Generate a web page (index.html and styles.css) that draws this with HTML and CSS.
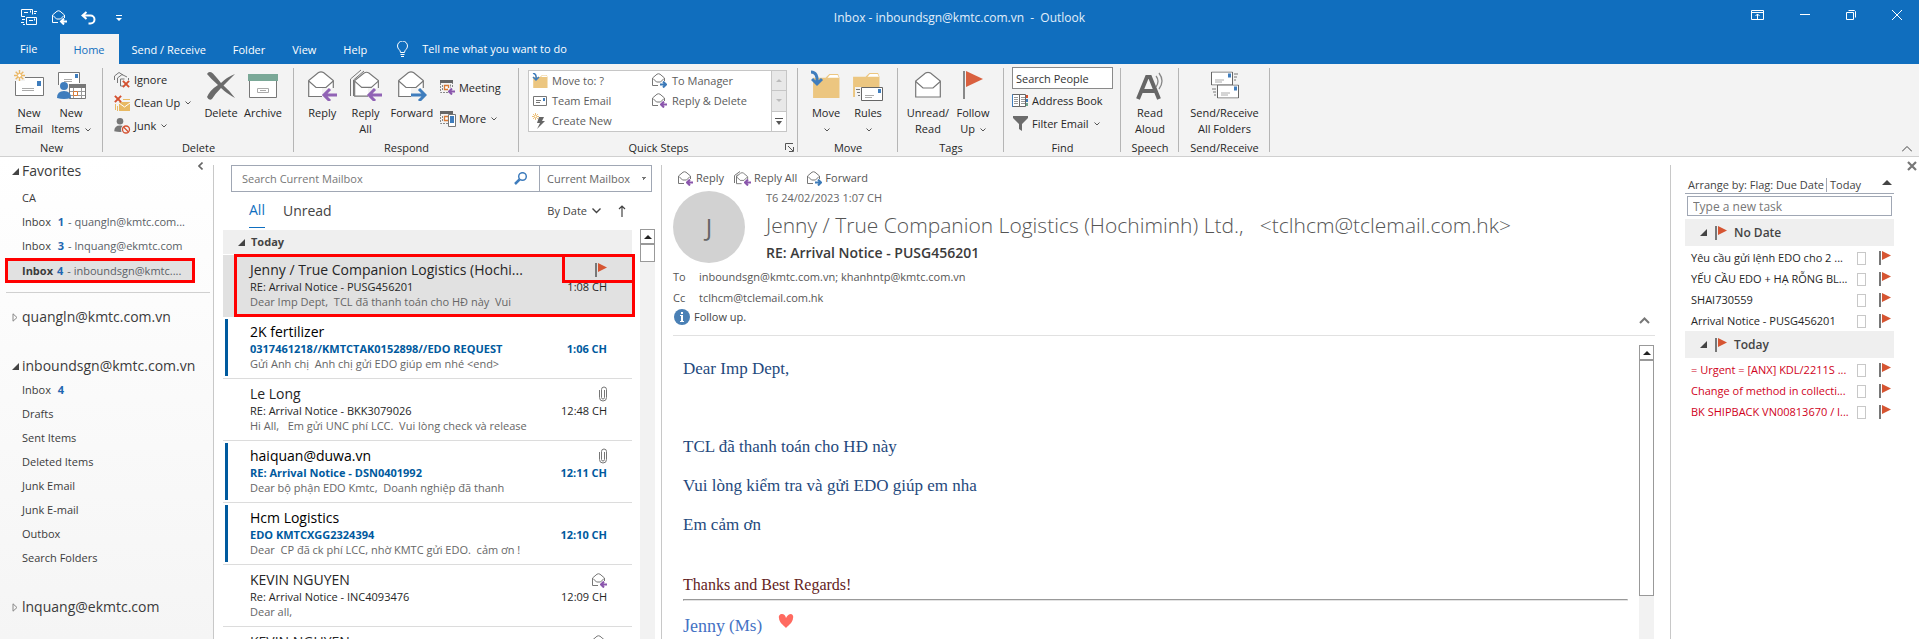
FILE: index.html
```
<!DOCTYPE html>
<html lang="en">
<head>
<meta charset="utf-8">
<title>Inbox - Outlook</title>
<link rel="stylesheet" href="styles.css">
</head>
<body>
<svg class="defs" aria-hidden="true">
  <symbol id="flag" viewBox="0 0 12 14"><path d="M0 0h2v14H0z" fill="#777"/><path d="M3 0l9 4.500L3 9z" fill="#d65532"/></symbol>
  <symbol id="tri-open" viewBox="0 0 7 7"><path d="M7 0v7H0z" fill="#444"/></symbol>
  <symbol id="tri-shut" viewBox="0 0 6 9"><path d="M.5.8v7.400L4.500 4.500z" fill="none" stroke="#888"/></symbol>
  <symbol id="chev" viewBox="0 0 6 4"><path d="M.5.5L3 3 5.500.5" fill="none" stroke="#555"/></symbol>
  <symbol id="tri-up" viewBox="0 0 8 4"><path d="M0 4l4-4 4 4z" fill="currentColor"/></symbol>
  <symbol id="clip" viewBox="0 0 8 16"><path d="M5.500 4v7.500a1.500 1.500 0 0 1-3 0V3.500a2.500 2.500 0 0 1 5 0v8a3.500 3.500 0 0 1-7 0V4" fill="none" stroke="#777"/></symbol>
  <symbol id="env-s" viewBox="0 0 15 15"><path d="M6 12.500H.5V5L5 1.200Q6.500.3 8 1.200L12.500 5v3M1 5.500L4.500 9h4L12 5.500" fill="none" stroke="#777"/></symbol>
  <symbol id="arr-l" viewBox="0 0 7 7"><path d="M7 3.500H1.500M4 .5L1 3.500l3 3" fill="none" stroke="#8a56ac" stroke-width="2"/></symbol>
  <symbol id="arr-r" viewBox="0 0 7 7"><path d="M0 3.500h5.500M3 .5l3 3-3 3" fill="none" stroke="#3c7ab8" stroke-width="2"/></symbol>
  <symbol id="reply-s" viewBox="0 0 15 15"><use href="#env-s" width="15" height="15"/><use href="#arr-l" x="8" y="8" width="7" height="7"/></symbol>
  <symbol id="fwd-s" viewBox="0 0 15 15"><use href="#env-s" width="15" height="15"/><use href="#arr-r" x="8" y="8" width="7" height="7"/></symbol>
  <symbol id="replyall-s" viewBox="0 0 17 15"><path d="M.5 12V4.500L6 .5M2.500 12V5L4 3.500" fill="none" stroke="#777"/><use href="#env-s" x="2" y="1" width="14" height="14"/><use href="#arr-l" x="10" y="8" width="7" height="7"/></symbol>
  <symbol id="env-l" viewBox="0 0 27 27"><path d="M.7 25.500V9.500L10.500 1.500q2.500-1.400 5 0l9.800 8v16z" fill="#fff" stroke="#777" stroke-width="1.200"/><path d="M.7 10L8 16.500h10L25.300 10" fill="none" stroke="#777" stroke-width="1.200"/></symbol>
  <symbol id="minimail" viewBox="0 0 22 14"><path d="M.5.5h21v13H.5z" fill="#fff" stroke="#666"/><path d="M17 2h3v4h-3z" fill="#3f7dbd"/><path d="M4 8.500h9M4 10.500h7" stroke="#aaa"/></symbol>
  <symbol id="folder" viewBox="0 0 28 25"><path d="M0 25V4h13l4-4h9l1.500 4V25z" fill="#ecc680"/><path d="M15 4l2.500-3h8L27 4z" fill="#fff"/></symbol>
  <symbol id="cal" viewBox="0 0 13 13"><path d="M0 0h13v3H0z" fill="#666"/><path d="M.5 3v9.500h12V3M2.500 5v6M10.500 4.500v6" fill="none" stroke="#888" stroke-dasharray="2 1"/><path d="M4.500 5.500h4v4h-4z" fill="#fff" stroke="#d87a35" stroke-width="1.300"/></symbol>
  <symbol id="spark" viewBox="0 0 12 12"><path d="M6 0v12M0 6h12M1.800 1.800l8.400 8.400M10.200 1.800l-8.400 8.400" stroke="#eab765" stroke-width="1.500"/><circle cx="6" cy="6" r="2.200" fill="#fff" stroke="#eab765"/></symbol>
  <symbol id="person" viewBox="0 0 14 17"><circle cx="7" cy="4" r="4" fill="currentColor"/><path d="M0 16q0-7 7-7t7 7q-7 2-14 0z" fill="currentColor"/></symbol>
  <symbol id="redx" viewBox="0 0 9 9"><path d="M1 1l7 7M8 1L1 8" stroke="#d4502f" stroke-width="2.200"/></symbol>
</svg>

<header class="titlebar">
  <div class="titlerow">
    <div class="quick">
      <button class="bare" aria-label="Send and receive all"><svg width="17" height="17" viewBox="0 0 17 17" fill="none" stroke="#fff"><path d="M4 7.500H.5v-7h11v5M5.500 8.500h10v7h-10zM3 3.500h4M8 11.500h4M13 2.500h3M13 4.500h2M1 10.500h3M0 13.500h3M2 15.500h2"/><path d="M9 2.500h1M13 10.500h1" stroke-width="2"/></svg></button>
      <button class="bare" aria-label="Reply"><svg width="15" height="15" viewBox="0 0 15 15" fill="none" stroke="#fff"><path d="M6 12.500H.5V5L5 1.200Q6.500.3 8 1.200L12.500 5v3M1 5.500L4.500 9h4L12 5.500"/><path d="M15 11.500H9.500M12 8.500l-3 3 3 3" stroke-width="2"/></svg></button>
      <button class="bare" aria-label="Undo"><svg width="15" height="14" viewBox="0 0 15 14" fill="none" stroke="#fff" stroke-width="2"><path d="M5.500 1L1.500 4.500l4 3.500M2 4.500h7.500a4 4 0 0 1 0 8H7.500"/></svg></button>
      <button class="bare" aria-label="Customize"><svg width="6" height="6" viewBox="0 0 6 6"><path d="M0 0h6v1H0zM0 3h6L3 6z" fill="#fff"/></svg></button>
    </div>
    <div class="wintitle">Inbox - inboundsgn@kmtc.com.vn&nbsp; -&nbsp; Outlook</div>
    <div class="winbtns">
      <button class="bare" aria-label="Ribbon display"><svg width="13" height="10" viewBox="0 0 13 10" fill="none" stroke="#fff"><path d="M.5.5h12v9H.5zM0 2.500h13M6.500 9V4M4.500 6l2-2 2 2"/></svg></button>
      <button class="bare" aria-label="Minimize"><svg width="10" height="10" viewBox="0 0 10 10"><path d="M0 4.500h10" stroke="#fff"/></svg></button>
      <button class="bare" aria-label="Restore"><svg width="10" height="10" viewBox="0 0 10 10" fill="none" stroke="#fff"><path d="M.5 2.500h7v7h-7zM2.500.5h6l1 1V7.500"/></svg></button>
      <button class="bare" aria-label="Close"><svg width="10" height="10" viewBox="0 0 10 10"><path d="M0 0l10 10M10 0L0 10" stroke="#fff"/></svg></button>
    </div>
  </div>
  <nav class="tabs">
    <a href="#" class="tab tab--file">File</a>
    <a href="#" class="tab tab--on">Home</a>
    <a href="#" class="tab">Send / Receive</a>
    <a href="#" class="tab">Folder</a>
    <a href="#" class="tab">View</a>
    <a href="#" class="tab">Help</a>
    <a href="#" class="tab tell"><svg width="11" height="16" viewBox="0 0 11 16" fill="none" stroke="#fff"><path d="M3.500 11.500C3.500 8.500.5 8.500.5 5a5 5 0 0 1 10 0c0 3.500-3 3.500-3 6.500zM3.500 13.500h4M4 15.500h3"/></svg>Tell me what you want to do</a>
  </nav>
</header>

<section class="ribbon" aria-label="Ribbon">
  <div class="group g-new">
    <div class="gbody">
      <button class="big"><svg width="31" height="30" viewBox="0 0 31 30"><path d="M1.500 7.500h28v18h-28z" fill="#fff" stroke="#777"/><path d="M23 11h4v5h-4z" fill="#3f7dbd"/><path d="M8 18.500h12M8 20.500h12" stroke="#aaa"/><path d="M0 0h11v11H0z" fill="#f3f3f3"/><use href="#spark" width="11" height="11"/></svg><span>New<br>Email</span></button>
      <button class="big"><svg width="30" height="30" viewBox="0 0 30 30"><path d="M2.500 15V2.500h21V13" fill="#fff" stroke="#777"/><path d="M19 4h3v4h-3z" fill="#3f7dbd"/><path d="M8 9.500h8M8 11.500h8" stroke="#aaa"/><path d="M13 14h17v15H13z" fill="#f3f3f3"/><path d="M13.500 14.500h16v14h-16z" fill="#fff" stroke="#777"/><path d="M13 14h17v4H13z" fill="#777"/><path d="M17.500 18v10M25.500 18v10M14 21.500h15M14 25.500h15" stroke="#999"/><path d="M17.500 21.500h4v4h-4z" fill="#fff" stroke="#d87a35"/><svg x="1" y="12" width="14" height="17" color="#3f7dbd"><use href="#person"/></svg></svg><span>New<br>Items <svg class="chev" width="6" height="4"><use href="#chev"/></svg></span></button>
    </div>
    <div class="glabel">New</div>
  </div>
  <div class="group g-delete">
    <div class="gbody">
      <div class="smalls">
        <button class="small"><svg width="17" height="16" viewBox="0 0 17 16"><path d="M.5 8V4L5 .5 9 3M3.500 11V6L8 2.500l5 2.500M6.500 14V7h4M6.500 14h3M14.500 6v2" fill="none" stroke="#777"/><use href="#redx" x="8" y="8" width="8" height="8"/></svg>Ignore</button>
        <button class="small"><svg width="17" height="16" viewBox="0 0 17 16"><path d="M5 7h11v9H5z" fill="#e8b963"/><path d="M5 8l5.500 4L16 8" stroke="#fff" fill="none"/><path d="M9 4.500h7M1.500 9v6M3.500 11v5" stroke="#e8b963"/><use href="#redx" x="0" y="0" width="8" height="8"/></svg>Clean Up <svg class="chev" width="6" height="4"><use href="#chev"/></svg></button>
        <button class="small"><svg width="17" height="16" viewBox="0 0 17 16"><svg width="12" height="14" color="#777"><use href="#person"/></svg><circle cx="12" cy="11.500" r="5" fill="#f3f3f3"/><circle cx="12" cy="11.500" r="3.500" fill="none" stroke="#d4502f" stroke-width="1.300"/><path d="M9.500 9l5 5" stroke="#d4502f" stroke-width="1.300"/></svg>Junk <svg class="chev" width="6" height="4"><use href="#chev"/></svg></button>
      </div>
      <button class="big"><svg width="30" height="30" viewBox="0 0 30 30"><path d="M1 4Q3 .5 7 3.500Q12 9 15 13Q21 7 29 4Q23 10 17.500 15.500Q24 21 29 28Q20 23 15 18Q9 24 6 29Q3 31 1 27Q4 20 12 15Q5 9 1 4z" fill="#6b6b6b"/></svg><span>Delete</span></button>
      <button class="big"><svg width="30" height="30" viewBox="0 0 30 30"><path d="M1.500 8h27v19.500h-27z" fill="#fff" stroke="#777"/><path d="M0 4h30v7H0z" fill="#7aa897"/><path d="M9.500 18.500h11v4h-11zM12 20.500h6" fill="none" stroke="#aaa"/></svg><span>Archive</span></button>
    </div>
    <div class="glabel">Delete</div>
  </div>
  <div class="group g-respond">
    <div class="gbody">
      <button class="big"><svg width="30" height="30" viewBox="0 0 30 30"><use href="#env-l" x="1" y="1" width="27" height="27"/><path d="M15 18h15v12H15z" fill="#f3f3f3"/><path d="M30 25H17M23 19l-6 6 6 6" fill="none" stroke="#9163b5" stroke-width="3"/></svg><span>Reply</span></button>
      <button class="big big--wide"><svg width="34" height="30" viewBox="0 0 34 30"><path d="M1.500 26V9L12 0M4.500 26V10L15 1" fill="none" stroke="#777"/><use href="#env-l" x="5" y="1" width="26" height="27"/><path d="M19 18h15v12H19z" fill="#f3f3f3"/><path d="M33 25H20M26 19l-6 6 6 6" fill="none" stroke="#9163b5" stroke-width="3"/></svg><span>Reply<br>All</span></button>
      <button class="big big--wide"><svg width="30" height="30" viewBox="0 0 30 30"><use href="#env-l" x="1" y="1" width="27" height="27"/><path d="M14 18h16v12H14z" fill="#f3f3f3"/><path d="M14 25h14M22 19l6 6-6 6" fill="none" stroke="#3f7dbd" stroke-width="3"/></svg><span>Forward</span></button>
      <div class="smalls smalls--two">
        <button class="small"><svg width="16" height="15" viewBox="0 0 16 15"><use href="#cal" width="13" height="13"/><path d="M8 8h7v7H8z" fill="#f3f3f3"/><use href="#arr-l" x="8" y="8" width="7" height="7"/></svg>Meeting</button>
        <button class="small"><svg width="16" height="16" viewBox="0 0 16 16"><use href="#cal" width="13" height="13"/><path d="M8.500 3.500h7v12h-7z" fill="#fff" stroke="#777"/><path d="M10 5h4v7h-4z" fill="#3f7dbd"/></svg>More <svg class="chev" width="6" height="4"><use href="#chev"/></svg></button>
      </div>
    </div>
    <div class="glabel">Respond</div>
  </div>
  <div class="group g-quick">
    <div class="gbody">
      <div class="gallery">
        <div class="steps">
          <button class="step"><svg width="16" height="16" viewBox="0 0 16 16"><use href="#folder" x="1" y="2" width="15" height="13"/><path d="M1 0q4 1 3 6M1 4l3 3 3-3" fill="none" stroke="#3f7dbd" stroke-width="1.500"/></svg>Move to: ?</button>
          <button class="step"><svg width="16" height="16" viewBox="0 0 16 16"><use href="#fwd-s" width="15" height="15"/></svg>To Manager</button>
          <button class="step"><svg width="16" height="16" viewBox="0 0 16 16"><path d="M1.500 3.500h13v9h-13zM4 7.500h5M4 9.500h4" fill="none" stroke="#777"/><path d="M11 5h2v3h-2z" fill="#3f7dbd"/></svg>Team Email</button>
          <button class="step"><svg width="16" height="16" viewBox="0 0 16 16"><use href="#reply-s" width="15" height="15"/></svg>Reply &amp; Delete</button>
          <button class="step"><svg width="16" height="16" viewBox="0 0 16 16"><use href="#spark" width="7" height="7"/><path d="M7 4h5l-2 4h3l-8 8 3-6H5z" fill="#666"/></svg>Create New</button>
        </div>
        <div class="gscroll">
          <button aria-label="Previous row"><svg width="6" height="3"><use href="#tri-up"/></svg></button>
          <button aria-label="Next row"><svg width="6" height="3" viewBox="0 0 6 3"><path d="M0 0h6L3 3z" fill="#bbb"/></svg></button>
          <button class="more" aria-label="More steps"><svg width="8" height="7" viewBox="0 0 8 7"><path d="M0 0h8v1H0zM1 3h6L4 7z" fill="#555"/></svg></button>
        </div>
      </div>
    </div>
    <div class="glabel">Quick Steps<svg class="launch" width="9" height="9" viewBox="0 0 9 9" fill="none" stroke="#555"><path d="M.5 7V.5H8M3 3l5 5M8.500 4v4.500H4"/></svg></div>
  </div>
  <div class="group g-move">
    <div class="gbody">
      <button class="big"><svg width="30" height="30" viewBox="0 0 30 30"><use href="#folder" x="2" y="4" width="27" height="24"/><path d="M0 2q7 0 6 11M1 9l5 5 5-5" fill="none" stroke="#3f7dbd" stroke-width="3"/></svg><span>Move<br><svg class="chev" width="6" height="4"><use href="#chev"/></svg></span></button>
      <button class="big"><svg width="32" height="32" viewBox="0 0 32 32"><use href="#folder" x="1" y="4" width="27" height="24"/><path d="M3 18h28v14H3z" fill="#f3f3f3"/><use href="#minimail" x="9" y="18" width="22" height="14"/><path d="M4 20.500h4M5 23.500h3M6 26.500h2" stroke="#777"/></svg><span>Rules<br><svg class="chev" width="6" height="4"><use href="#chev"/></svg></span></button>
    </div>
    <div class="glabel">Move</div>
  </div>
  <div class="group g-tags">
    <div class="gbody">
      <button class="big big--wide"><svg width="27" height="28" viewBox="0 0 27 27"><use href="#env-l" width="27" height="27"/></svg><span>Unread/<br>Read</span></button>
      <button class="big"><svg width="20" height="28" viewBox="0 0 20 28"><path d="M0 0h2v28H0z" fill="#888"/><path d="M3 0l17 8-17 8z" fill="#d9603f"/></svg><span>Follow<br>Up <svg class="chev" width="6" height="4"><use href="#chev"/></svg></span></button>
    </div>
    <div class="glabel">Tags</div>
  </div>
  <div class="group g-find">
    <div class="gbody findcol">
      <input class="people" type="text" placeholder="Search People" aria-label="Search People">
      <button class="small"><svg width="17" height="14" viewBox="0 0 17 14"><path d="M.5.5h7v12h-7zM7.500.5h6v12h-6z" fill="#fff" stroke="#666"/><path d="M.5 13V.5" stroke="#3f7dbd"/><path d="M2 3.500h4M2 5.500h4M2 7.500h4M2 9.500h4M9 3.500h4M9 5.500h4M9 7.500h4M9 9.500h4" stroke="#999"/><path d="M14 1h2v3h-2z" fill="#d4502f"/><path d="M14 5h2v3h-2z" fill="#3f7dbd"/><path d="M14 9h2v3h-2z" fill="#6aa58e"/></svg>Address Book</button>
      <button class="small"><svg width="17" height="15" viewBox="0 0 17 15"><path d="M1 0h15v2l-6 6v7l-3-2V8L1 2z" fill="#6b6b6b"/></svg>Filter Email <svg class="chev" width="6" height="4"><use href="#chev"/></svg></button>
    </div>
    <div class="glabel">Find</div>
  </div>
  <div class="group g-speech">
    <div class="gbody">
      <button class="big big--fill"><svg width="30" height="30" viewBox="0 0 30 30"><path d="M3 29L12 7h3l9 22M7 21h13" fill="none" stroke="#666" stroke-width="4"/><path d="M21 6q4 5 0 11M24 3q6 8 0 16" fill="none" stroke="#888" stroke-width="1.300"/></svg><span>Read<br>Aloud</span></button>
    </div>
    <div class="glabel">Speech</div>
  </div>
  <div class="group g-sr">
    <div class="gbody">
      <button class="big big--fill"><svg width="30" height="29" viewBox="0 0 30 29"><use href="#minimail" x="1" y="1" width="22" height="14"/><path d="M24 3.500h4M24 6.500h3M24 9.500h2M2 18.500h4M3 21.500h3M4 24.500h2" stroke="#777"/><use href="#minimail" x="7" y="14" width="22" height="14"/></svg><span>Send/Receive<br>All Folders</span></button>
    </div>
    <div class="glabel">Send/Receive</div>
  </div>
  <button class="bare collapse" aria-label="Collapse ribbon"><svg width="10" height="6" viewBox="0 0 10 6"><path d="M0 5.500l5-5 5 5" fill="none" stroke="#444"/></svg></button>
</section>

<main class="main">
  <nav class="folders" aria-label="Folders">
    <button class="bare foldpane" aria-label="Collapse folder pane"><svg width="5" height="8" viewBox="0 0 5 8"><path d="M4.500.5L1 4l3.500 3.500" fill="none" stroke="#666" stroke-width="1.600"/></svg></button>
    <a href="#" class="acct"><svg width="7" height="7"><use href="#tri-open"/></svg>Favorites</a>
    <a href="#" class="fold">CA</a>
    <a href="#" class="fold">Inbox <b>1</b><small>- quangln@kmtc.com...</small></a>
    <a href="#" class="fold">Inbox <b>3</b><small>- lnquang@ekmtc.com</small></a>
    <a href="#" class="fold fold--on"><strong>Inbox</strong> <b>4</b><small>- inboundsgn@kmtc....</small></a>
    <hr class="foldrule">
    <a href="#" class="acct"><svg width="6" height="9"><use href="#tri-shut"/></svg>quangln@kmtc.com.vn</a>
    <a href="#" class="acct acct--gap"><svg width="7" height="7"><use href="#tri-open"/></svg>inboundsgn@kmtc.com.vn</a>
    <a href="#" class="fold">Inbox <b>4</b></a>
    <a href="#" class="fold">Drafts</a>
    <a href="#" class="fold">Sent Items</a>
    <a href="#" class="fold">Deleted Items</a>
    <a href="#" class="fold">Junk Email</a>
    <a href="#" class="fold">Junk E-mail</a>
    <a href="#" class="fold">Outbox</a>
    <a href="#" class="fold">Search Folders</a>
    <a href="#" class="acct acct--gap"><svg width="6" height="9"><use href="#tri-shut"/></svg>lnquang@ekmtc.com</a>
  </nav>

  <section class="list" aria-label="Messages">
    <div class="search">
      <input type="text" placeholder="Search Current Mailbox" aria-label="Search Current Mailbox">
      <button class="bare" aria-label="Search"><svg width="14" height="13" viewBox="0 0 14 13"><circle cx="8.500" cy="4.500" r="3.800" fill="none" stroke="#3f7dbd" stroke-width="1.500"/><path d="M5.500 7.500L1 12" stroke="#3f7dbd" stroke-width="2.500"/></svg></button>
      <select aria-label="Search scope"><option>Current Mailbox</option></select>
    </div>
    <div class="filters">
      <a href="#" class="filter filter--on">All</a>
      <a href="#" class="filter">Unread</a>
      <button class="bare sort">By Date <svg width="9" height="6" viewBox="0 0 9 6"><path d="M.5.5l4 4 4-4" fill="none" stroke="#444" stroke-width="1.400"/></svg></button>
      <button class="bare" aria-label="Reverse sort"><svg width="8" height="12" viewBox="0 0 8 12"><path d="M4 12V1M1 4l3-3 3 3" fill="none" stroke="#444" stroke-width="1.200"/></svg></button>
    </div>
    <div class="scroller">
      <div class="mails">
        <div class="dayhead"><svg width="7" height="7"><use href="#tri-open"/></svg>Today</div>
        <a href="#" class="mail mail--on">
          <span class="from">Jenny / True Companion Logistics (Hochi...</span><span class="mark markflag"><svg width="12" height="14"><use href="#flag"/></svg></span>
          <span class="subj">RE: Arrival Notice - PUSG456201</span><time>1:08 CH</time>
          <span class="prev">Dear Imp Dept,&nbsp; TCL đã thanh toán cho HĐ này&nbsp; Vui</span>
        </a>
        <a href="#" class="mail mail--new">
          <span class="from">2K fertilizer</span><span class="mark"></span>
          <span class="subj">0317461218//KMTCTAK0152898//EDO REQUEST</span><time>1:06 CH</time>
          <span class="prev">Gửi Anh chị&nbsp; Anh chị gửi EDO giúp em nhé &lt;end&gt;</span>
        </a>
        <a href="#" class="mail">
          <span class="from">Le Long</span><span class="mark"><svg width="8" height="16"><use href="#clip"/></svg></span>
          <span class="subj">RE: Arrival Notice - BKK3079026</span><time>12:48 CH</time>
          <span class="prev">Hi All,&nbsp;&nbsp; Em gửi UNC phí LCC.&nbsp; Vui lòng check và release</span>
        </a>
        <a href="#" class="mail mail--new">
          <span class="from">haiquan@duwa.vn</span><span class="mark"><svg width="8" height="16"><use href="#clip"/></svg></span>
          <span class="subj">RE: Arrival Notice - DSN0401992</span><time>12:11 CH</time>
          <span class="prev">Dear bộ phận EDO Kmtc,&nbsp; Doanh nghiệp đã thanh</span>
        </a>
        <a href="#" class="mail mail--new">
          <span class="from">Hcm Logistics</span><span class="mark"></span>
          <span class="subj">EDO KMTCXGG2324394</span><time>12:10 CH</time>
          <span class="prev">Dear&nbsp; CP đã ck phí LCC, nhờ KMTC gửi EDO.&nbsp; cảm ơn !</span>
        </a>
        <a href="#" class="mail">
          <span class="from">KEVIN NGUYEN</span><span class="mark"><svg width="15" height="15"><use href="#reply-s"/></svg></span>
          <span class="subj">Re: Arrival Notice - INC4093476</span><time>12:09 CH</time>
          <span class="prev">Dear all,</span>
        </a>
        <a href="#" class="mail">
          <span class="from">KEVIN NGUYEN</span><span class="mark"><svg width="15" height="15"><use href="#reply-s"/></svg></span>
        </a>
      </div>
      <div class="sbar"><button aria-label="Scroll up"><svg width="8" height="4"><use href="#tri-up"/></svg></button><div class="thumb"></div></div>
    </div>
  </section>

  <article class="reader">
    <div class="acts">
      <button class="bare"><svg width="15" height="15"><use href="#reply-s"/></svg>Reply</button>
      <button class="bare"><svg width="17" height="15"><use href="#replyall-s"/></svg>Reply All</button>
      <button class="bare"><svg width="15" height="15"><use href="#fwd-s"/></svg>Forward</button>
    </div>
    <div class="head">
      <div class="avatar">J</div>
      <div class="headtext">
        <div class="date">T6 24/02/2023 1:07 CH</div>
        <div class="sender">Jenny / True Companion Logistics (Hochiminh) Ltd.,&nbsp; &nbsp;&lt;tclhcm@tclemail.com.hk&gt;</div>
        <h1 class="subject">RE: Arrival Notice - PUSG456201</h1>
      </div>
    </div>
    <div class="addr"><span>To</span>inboundsgn@kmtc.com.vn; khanhntp@kmtc.com.vn</div>
    <div class="addr"><span>Cc</span>tclhcm@tclemail.com.hk</div>
    <div class="follow"><svg width="16" height="16" viewBox="0 0 16 16"><circle cx="8" cy="8" r="8" fill="#4a80b5"/><path d="M7 3h2v2H7zM6 6h3v6h1v1H6v-1h1V7H6z" fill="#fff"/></svg>Follow up.<button class="bare expand" aria-label="Collapse header"><svg width="11" height="7" viewBox="0 0 11 7"><path d="M1 6l4.500-4.500L10 6" fill="none" stroke="#777" stroke-width="2"/></svg></button></div>
    <div class="bodywrap">
      <div class="body">
        <p>Dear Imp Dept,</p>
        <p>&nbsp;</p>
        <p>TCL đã thanh toán cho HĐ này</p>
        <p>Vui lòng kiểm tra và gửi EDO giúp em nha</p>
        <p>Em cảm ơn</p>
        <p class="thanks">Thanks and Best Regards!</p>
        <hr class="sigrule">
        <p class="sig">Jenny <span>(Ms)</span><svg width="16" height="14" viewBox="0 0 16 14"><path d="M8 14C5 11 1 8 1 4a3 3 0 0 1 3-4q3 0 4 4 2-4 5-4a3 3 0 0 1 2 4c0 4-4 7-7 10z" fill="#ff6a60"/></svg></p>
      </div>
      <div class="sbar"><button aria-label="Scroll up"><svg width="8" height="4"><use href="#tri-up"/></svg></button><div class="thumb thumb--long"></div></div>
    </div>
  </article>

  <aside class="todo" aria-label="Tasks">
    <button class="bare closepane" aria-label="Close tasks"><svg width="10" height="10" viewBox="0 0 10 10"><path d="M1 1l8 8M9 1L1 9" stroke="#777" stroke-width="2.200"/></svg></button>
    <div class="arrange"><span class="by">Arrange by: Flag: Due Date</span><span>Today</span><svg width="10" height="5"><use href="#tri-up"/></svg></div>
    <input class="newtask" type="text" placeholder="Type a new task" aria-label="New task">
    <div class="taskhead"><svg width="7" height="7"><use href="#tri-open"/></svg><svg width="12" height="14"><use href="#flag"/></svg>No Date</div>
    <label class="task"><span>Yêu cầu gửi lệnh EDO cho 2 ...</span><input type="checkbox"><svg width="12" height="14"><use href="#flag"/></svg></label>
    <label class="task"><span>YẾU CẦU EDO + HẠ RỖNG BL...</span><input type="checkbox"><svg width="12" height="14"><use href="#flag"/></svg></label>
    <label class="task"><span>SHAI730559</span><input type="checkbox"><svg width="12" height="14"><use href="#flag"/></svg></label>
    <label class="task"><span>Arrival Notice - PUSG456201</span><input type="checkbox"><svg width="12" height="14"><use href="#flag"/></svg></label>
    <div class="taskhead"><svg width="7" height="7"><use href="#tri-open"/></svg><svg width="12" height="14"><use href="#flag"/></svg>Today</div>
    <label class="task task--late"><span>= Urgent = [ANX] KDL/2211S ...</span><input type="checkbox"><svg width="12" height="14"><use href="#flag"/></svg></label>
    <label class="task task--late"><span>Change of method in collecti...</span><input type="checkbox"><svg width="12" height="14"><use href="#flag"/></svg></label>
    <label class="task task--late"><span>BK SHIPBACK VN00813670 / I...</span><input type="checkbox"><svg width="12" height="14"><use href="#flag"/></svg></label>
  </aside>
</main>
</body>
</html>
```
FILE: styles.css
```
*, *::before, *::after { box-sizing: border-box; }
html, body { height: 100%; }
body {
  margin: 0;
  display: flex;
  flex-direction: column;
  overflow: hidden;
  background: #fff;
  color: #262626;
  font: 11px/16px "Open Sans", "Noto Sans", sans-serif;
}
a { color: inherit; text-decoration: none; }
button, input, select { font: inherit; color: inherit; }
button { background: none; border: 0; padding: 0; }
svg { flex: none; display: block; }
.bare { display: flex; align-items: center; }
.defs { position: absolute; width: 0; height: 0; }
.chev { display: inline-block; vertical-align: middle; margin-left: 2px; }

/* title bar */
.titlebar { flex: none; background: #106ebe; color: #fff; }
.titlerow { display: grid; grid-template-columns: 1fr auto 1fr; align-items: center; height: 34px; padding-top: 1px; }
.quick { display: flex; align-items: center; gap: 14px; padding-left: 21px; }
.quick button:last-child { margin-left: 6px; }
.wintitle { color: #e2eefa; font-size: 12px; }
.winbtns { display: flex; justify-content: flex-end; align-items: center; gap: 36px; padding: 0 17px 5px 0; }
.tabs { display: flex; height: 30px; align-items: stretch; }
.tab { display: flex; align-items: center; padding: 2px 14px 0 13px; }
.tab--file { padding: 0 23px 0 20px; }
.tab--on { background: #f3f3f3; color: #106ebe; }
.tell { gap: 14px; padding: 0 0 0 16px; }

/* ribbon */
.ribbon { flex: none; display: flex; position: relative; background: #f3f3f3; border-bottom: 1px solid #d0d0d0; height: 93px; }
.group { display: flex; flex-direction: column; flex: none; position: relative; }
.group::after { content: ""; position: absolute; right: 0; top: 4px; bottom: 4px; width: 1px; background: #b5b5b5; }
.gbody { display: flex; height: 76px; padding-top: 5px; }
.glabel { text-align: center; }
.g-new { width: 103px; } .g-new .gbody { padding-left: 8px; }
.g-delete { width: 191px; } .g-delete .gbody { padding-left: 10px; }
.g-respond { width: 225px; } .g-respond .gbody { padding-left: 8px; }
.g-quick { width: 279px; } .g-quick .gbody { padding: 6px 11px 8px 9px; }
.g-move { width: 100px; } .g-move .gbody { padding-left: 7px; }
.g-tags { width: 106px; } .g-tags .gbody { padding-left: 6px; }
.g-find { width: 117px; } .g-find .gbody { padding: 3px 8px 0; }
.g-speech { width: 58px; }
.g-sr { width: 91px; }
.big { display: flex; flex-direction: column; align-items: center; width: 42px; line-height: 16px; text-align: center; white-space: nowrap; }
.big > svg { height: 32px; margin-bottom: 4px; }
.big > span { display: flow-root; }
.big--wide { width: 48px; }
.big--fill { width: 100%; }
.smalls { display: flex; flex-direction: column; width: 87px; }
.g-delete .smalls { width: 86px; margin: -1px 0 0 1px; }
.smalls--two { padding: 7px 0 0 5px; gap: 8px; }
.small { display: flex; align-items: center; height: 23px; gap: 3px; white-space: nowrap; }
.gallery { display: flex; flex: 1; border: 1px solid #c6c6c6; background: #fff; color: #5c5c5c; }
.steps { flex: 1; display: grid; grid-template-columns: 120px 1fr; grid-auto-rows: 20px; padding-left: 3px; }
.step { display: flex; align-items: center; gap: 4px; white-space: nowrap; }
.gscroll { display: flex; flex-direction: column; width: 15px; border-left: 1px solid #c6c6c6; color: #bbb; }
.gscroll button { flex: 1; display: grid; place-items: center; background: #e8e8e8; border-bottom: 1px solid #c6c6c6; }
.gscroll .more { background: #fff; border-bottom: 0; }
.launch { position: absolute; right: 4px; bottom: 4px; }
.findcol { flex-direction: column; }
.people { height: 22px; flex: none; width: 100%; border: 1px solid #8a8a8a; background: #fff; padding: 0 3px; }
.people::placeholder { color: #333; opacity: 1; }
.collapse { position: absolute; right: 7px; bottom: 4px; }

/* panes */
.main { flex: 1; display: flex; min-height: 0; }
.folders { flex: none; width: 214px; padding-top: 2px; position: relative; background: linear-gradient(#fff, #f5f5f5); color: #3b3b3b; }
.folders::after, .list::after, .reader::after { content: ""; position: absolute; right: 0; top: 8px; bottom: 0; width: 1px; background: #c8c8c8; }
.foldpane { position: absolute; right: 11px; top: 5px; }
.acct { display: flex; align-items: center; height: 24px; padding-left: 12px; gap: 3px; font-size: 14px; }
.acct svg { width: 7px; }
.acct--gap { margin-top: 25px; }
.acct:first-of-type { margin-bottom: 3px; }
.fold { display: flex; align-items: center; height: 24px; padding-left: 22px; white-space: pre; }
.fold b { color: #1f66b0; margin-left: 4px; }
.fold small { font-size: 11px; margin-left: 4px; color: #5a5f66; }
.fold--on { background: #e1e1e1; border: 3px solid #f00; margin: 0 19px 0 5px; padding-left: 14px; height: 25px; }
.foldrule { margin: 9px 4px 12px 6px; border: 0; border-top: 1px solid #d0d0d0; }

.list { flex: none; width: 448px; position: relative; display: flex; flex-direction: column; padding-top: 8px; }
.search { display: flex; align-items: stretch; flex: none; height: 27px; margin: 0 10px 0 17px; border: 1px solid #a0a7b4; color: #666; }
.search input { flex: 1; min-width: 0; border: 0; padding: 0 10px; outline: 0; background: none; }
.search input::placeholder, .newtask::placeholder { color: #777; opacity: 1; }
.search button { padding-right: 11px; }
.search select { appearance: none; width: 112px; border: 0; border-left: 1px solid #a0a7b4; padding: 0 7px; background: linear-gradient(45deg, transparent 50%, #777 50%) no-repeat right 7px center / 3px 3px, linear-gradient(-45deg, transparent 50%, #777 50%) no-repeat right 4px center / 3px 3px; }
.filters { display: flex; flex: none; height: 37px; align-items: center; padding: 0 36px 0 35px; color: #444; }
.filter { display: flex; align-items: center; height: 35px; font-size: 14px; margin-right: 18px; }
.filter--on { color: #0f6fc0; border-bottom: 1px solid #0f6fc0; }
.sort { margin-left: auto; margin-right: 17px; gap: 5px; }
.scroller { flex: 1; min-height: 0; display: flex; }
.mails { flex: 1; min-width: 0; overflow: hidden; margin: 1px 5px 0 9px; padding-right: 3px; }
.dayhead { display: flex; align-items: center; gap: 6px; height: 24px; padding-left: 15px; margin-bottom: 1px; background: #efefef; font-weight: 700; color: #444; }
.mail { display: grid; grid-template-columns: 1fr auto; grid-template-rows: 18px 15px 15px; height: 62px; padding: 6px 25px 0 27px; border-bottom: 1px solid #dcdcdc; position: relative; white-space: nowrap; line-height: 15px; }
.mail .from { font-size: 14px; line-height: 18px; color: #262626; }
.mail .mark { display: flex; justify-content: flex-end; align-items: center; }
.mail .prev { grid-column: 1 / -1; color: #666; }
.mail time { text-align: right; }
.mail--new::before { content: ""; position: absolute; left: 2px; top: 2px; bottom: 2px; width: 3px; background: #005a9e; }
.mail--new .from { color: #000; }
.mail--new .subj, .mail--new time { color: #005a9e; font-weight: 700; }
.mail--on { background: #e1e1e1; border-bottom-color: #e1e1e1; }
.mail--on::after { content: ""; position: absolute; inset: -1px -3px -1px 11px; border: 3px solid #f00; }
.mail--on .markflag { position: relative; padding-right: 0; }
.mail--on .markflag::after { content: ""; position: absolute; right: -28px; top: -7px; width: 73px; height: 29px; border: 3px solid #f00; }
.sbar { flex: none; width: 15px; margin-right: 7px; background: #f2f2f2; color: #222; }
.sbar button { display: grid; place-items: center; width: 15px; height: 15px; border: 1px solid #999; background: #fff; }
.thumb { height: 18px; border: 1px solid #999; background: #fff; }

.reader { flex: 1; min-width: 0; position: relative; display: flex; flex-direction: column; padding-top: 12px; }
.acts { display: flex; gap: 10px; padding-left: 16px; height: 18px; color: #555; }
.acts .bare { gap: 3px; }
.head { display: flex; padding-left: 11px; margin-top: 4px; }
.avatar { width: 72px; height: 72px; border-radius: 50%; background: #d2d2d2; color: #666; display: grid; place-items: center; font-size: 24px; }
.headtext { margin-left: 21px; }
.date { color: #666; line-height: 14px; }
.sender { font-size: 21px; line-height: 40px; font-weight: 300; color: #555; white-space: nowrap; }
.subject { margin: 0; font-size: 14px; line-height: 16px; font-weight: 600; color: #3b3b3b; }
.addr { display: flex; padding-left: 11px; height: 21px; align-items: center; color: #555; }
.head + .addr { margin-top: 3px; }
.addr span { width: 26px; }
.follow { display: flex; align-items: center; gap: 4px; height: 28px; padding: 0 5px 10px 1px; margin: 0 16px 0 11px; border-bottom: 1px solid #e1e1e1; color: #444; }
.expand { margin: 8px 0 0 auto; }
.bodywrap { flex: 1; min-height: 0; display: flex; padding-top: 9px; }
.bodywrap .sbar { margin-right: 17px; }
.thumb--long { height: 236px; }
.body { flex: 1; min-width: 0; overflow: hidden; padding: 4px 11px 0 21px; color: #1f497d; font: 17px/39px "Liberation Serif", "Times New Roman", serif; }
.body p { margin: 0; }
.body .thanks { color: #632423; font-size: 16px; line-height: 24px; padding-top: 29px; }
.sigrule { margin: 2px 0 0; border: 1px solid; border-color: #999 #e3e3e3 #e3e3e3 #999; }
.body .sig { display: flex; gap: 4px; color: #4472c4; font-size: 18px; line-height: 24px; padding-top: 13px; }
.sig span { font-size: 17px; }
.sig svg { margin-left: 12px; }

.todo { flex: none; width: 248px; position: relative; padding: 19px 25px 0 14px; color: #444; }
.closepane { position: absolute; right: 2px; top: 4px; }
.arrange { display: flex; align-items: center; height: 18px; padding-left: 3px; border-bottom: 1px solid #a0a7b4; }
.arrange .by { border-right: 1px solid #a0a7b4; padding-right: 2px; margin-right: 3px; line-height: 14px; }
.arrange svg { margin: 0 2px 4px auto; }
.newtask { display: block; width: 205px; height: 20px; margin: 2px 2px 3px; border: 1px solid #a0a7b4; padding: 0 5px; background: #fff; }
.newtask, .taskhead { font-size: 12px; }
.taskhead { display: flex; align-items: center; height: 27px; background: #efefef; padding-left: 15px; font-weight: 600; }
.taskhead svg + svg { margin: 0 7px 0 8px; }
.task { display: flex; align-items: center; height: 21px; padding-left: 6px; color: #262626; white-space: nowrap; }
.taskhead + .task { margin-top: 1px; }
.task span { flex: 1; min-width: 0; }
.task input { appearance: none; width: 9px; height: 13px; margin: 2px 13px 0 0; border: 1px solid #c8c8c8; background: #fff; }
.task svg { margin-right: 3px; }
.task--late { color: #d0021b; }
```
